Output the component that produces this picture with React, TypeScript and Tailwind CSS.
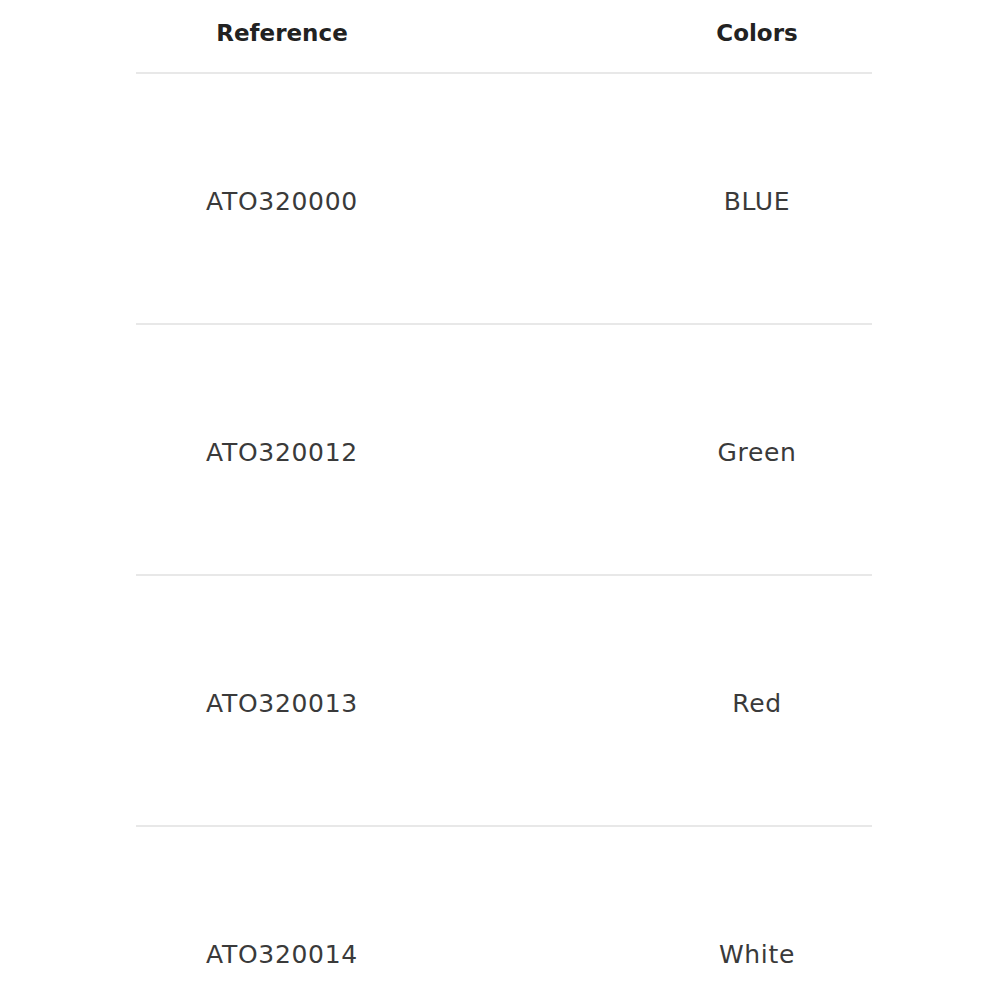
const rows = [
  { ref: 'ATO320000', color: 'BLUE' },
  { ref: 'ATO320012', color: 'Green' },
  { ref: 'ATO320013', color: 'Red' },
  { ref: 'ATO320014', color: 'White' },
]

export default function App() {
  return (
    <div className="h-[1000px] w-[1000px] overflow-hidden bg-white font-['DejaVu_Sans',sans-serif]">
      <div className="ml-[136px] w-[736px]">
        <div className="grid h-[74px] grid-cols-[292px_214px_230px] items-center border-b-2 border-[#e8e8e8] pb-[6px] text-[23px] font-bold text-[#222]">
          <div className="text-center">Reference</div>
          <div />
          <div className="text-center">Colors</div>
        </div>
        {rows.map((r) => (
          <div
            key={r.ref}
            className="grid h-[251px] grid-cols-[292px_214px_230px] items-center border-b-2 border-[#e8e8e8] pt-[7px] text-[25px] tracking-[0.7px] text-[#3a3a3a]"
          >
            <div className="text-center">{r.ref}</div>
            <div />
            <div className="text-center">{r.color}</div>
          </div>
        ))}
      </div>
    </div>
  )
}
